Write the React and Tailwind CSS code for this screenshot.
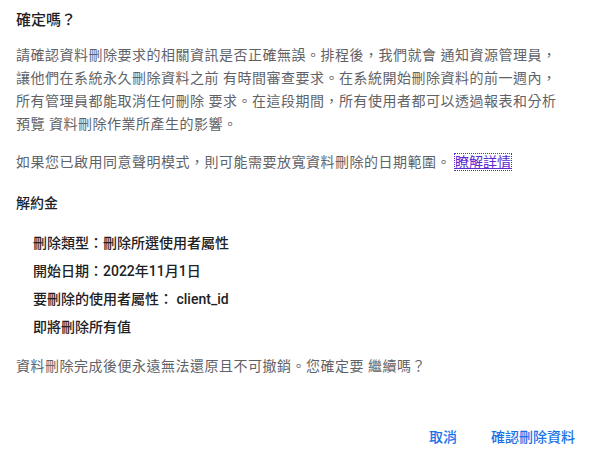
import React from 'react';

const details = [
  '刪除類型：刪除所選使用者屬性',
  '開始日期：2022年11月1日',
  '要刪除的使用者屬性： client_id',
  '即將刪除所有值',
];

export default function App() {
  return (
    <div className="w-[597px] h-[464px] bg-white px-4 pt-[8px] font-['Roboto','Noto_Sans_CJK_TC',sans-serif]">
      <h2 className="text-[15px] font-medium leading-[24px] text-[#202124]">確定嗎？</h2>

      <p className="mt-[12px] text-[14px] leading-[23px] text-[#5f6368] tracking-[0.5px]">
        請確認資料刪除要求的相關資訊是否正確無誤。排程後，我們就會 通知資源管理員，
        <br />
        讓他們在系統永久刪除資料之前 有時間審查要求。在系統開始刪除資料的前一週內，
        <br />
        所有管理員都能取消任何刪除 要求。在這段期間，所有使用者都可以透過報表和分析
        <br />
        預覽 資料刪除作業所產生的影響。
      </p>

      <p className="mt-[15px] text-[14px] leading-[23px] text-[#5f6368] tracking-[0.5px]">
        如果您已啟用同意聲明模式，則可能需要放寬資料刪除的日期範圍。{' '}
        <a href="#" className="text-[#5b2bd1] underline outline-1 outline-dotted outline-[#5b2bd1] tracking-normal">
          瞭解詳情
        </a>
      </p>

      <h3 className="mt-[17px] text-[14px] font-medium leading-[24px] text-[#202124]">解約金</h3>

      <ul className="mt-[16px] pl-[17px] flex flex-col gap-[4px]">
        {details.map((d) => (
          <li key={d} className="text-[14px] font-medium leading-[24px] text-[#202124]">
            {d}
          </li>
        ))}
      </ul>

      <p className="mt-[16px] text-[14px] leading-[23px] text-[#5f6368] tracking-[0.5px]">
        資料刪除完成後便永遠無法還原且不可撤銷。您確定要 繼續嗎？
      </p>

      <div className="mt-[47px] flex justify-end gap-[34px] pr-[6px]">
        <button className="text-[14px] font-medium leading-[24px] text-[#1a73e8]">取消</button>
        <button className="text-[14px] font-medium leading-[24px] text-[#1a73e8]">確認刪除資料</button>
      </div>
    </div>
  );
}
